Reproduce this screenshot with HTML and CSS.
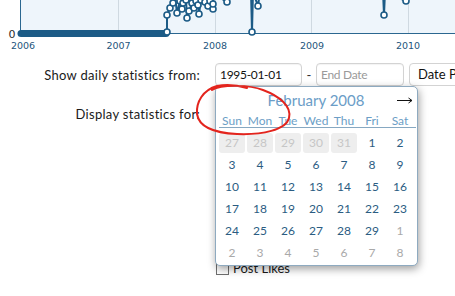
FILE: index.html
```html
<!DOCTYPE html>
<html lang="en">
<head>
<meta charset="utf-8">
<title>Daily Statistics</title>
<link rel="stylesheet" href="styles.css">
</head>
<body>
<svg class="chart" width="455" height="52" viewBox="0 0 455 52" xmlns="http://www.w3.org/2000/svg">
  <rect x="20" y="0" width="435" height="34" fill="#eef5fb"/>
  <g stroke="#cfd9e1" stroke-width="1">
    <line x1="118.5" y1="0" x2="118.5" y2="33"/>
    <line x1="215.5" y1="0" x2="215.5" y2="33"/>
    <line x1="311.5" y1="0" x2="311.5" y2="33"/>
    <line x1="408.5" y1="0" x2="408.5" y2="33"/>
  </g>
  <line x1="20.5" y1="0" x2="20.5" y2="34" stroke="#2b6790" stroke-width="1"/>
  <line x1="20" y1="33.5" x2="455" y2="33.5" stroke="#2b6790" stroke-width="1"/>
  <text class="axis-zero" x="12" y="38" text-anchor="middle">0</text>
  <g class="axis-year" text-anchor="middle">
    <text x="23" y="49">2006</text>
    <text x="118.5" y="49">2007</text>
    <text x="215" y="49">2008</text>
    <text x="312" y="49">2009</text>
    <text x="408" y="49">2010</text>
  </g>
  <line x1="21" y1="33.5" x2="166" y2="33.5" stroke="#1c5b86" stroke-width="7" stroke-linecap="round"/>
  <polyline fill="none" stroke="#1c5b86" stroke-width="2" stroke-linejoin="round"
    points="166,33 167,32 167,15 170,8 173,3 175,-4 177,13 180,1 182,9 183,3 186,0 187,18 189,11 192,3 194,8 196,1 198,5 199,14 201,0 205,2 208,6 210,1 213,9 213,4 214,-6 227,2 229,-8 251,-8 252,32 253,-8 258,6 260,-8 383,-8 384,15 385,-8 406,1 408,-8 455,-8"/>
  <g fill="#ffffff" stroke="#1c5b86" stroke-width="1.6">
    <circle cx="167" cy="32" r="3"/>
    <circle cx="167" cy="15" r="3"/>
    <circle cx="170" cy="8" r="3"/>
    <circle cx="173" cy="3" r="3"/>
    <circle cx="177" cy="13" r="3"/>
    <circle cx="180" cy="1" r="3"/>
    <circle cx="182" cy="9" r="3"/>
    <circle cx="183" cy="3" r="3"/>
    <circle cx="186" cy="0" r="3"/>
    <circle cx="187" cy="18" r="3"/>
    <circle cx="189" cy="11" r="3"/>
    <circle cx="192" cy="3" r="3"/>
    <circle cx="194" cy="8" r="3"/>
    <circle cx="196" cy="1" r="3"/>
    <circle cx="198" cy="5" r="3"/>
    <circle cx="199" cy="14" r="3"/>
    <circle cx="201" cy="0" r="3"/>
    <circle cx="205" cy="2" r="3"/>
    <circle cx="208" cy="6" r="3"/>
    <circle cx="210" cy="1" r="3"/>
    <circle cx="213" cy="9" r="3"/>
    <circle cx="213" cy="4" r="3"/>
    <circle cx="227" cy="2" r="3"/>
    <circle cx="252" cy="32" r="3"/>
    <circle cx="258" cy="6" r="3"/>
    <circle cx="384" cy="15" r="3"/>
    <circle cx="406" cy="1" r="3"/>
  </g>
</svg>

<form class="stats-form">
  <div class="form-row row-dates">
    <label class="row-label" for="start">Show daily statistics from:</label>
    <div class="controls">
      <div class="date-field">
        <input class="text-input" id="start" type="text" value="1995-01-01">
        <div class="calendar">
          <div class="cal-head">
            <span class="cal-prev"></span>
            <span class="cal-title">February 2008</span>
            <svg class="cal-next" width="16" height="7" viewBox="0 0 16 7" xmlns="http://www.w3.org/2000/svg">
              <path d="M0 3.5H15M11.5 1L15 3.5L11.5 6" fill="none" stroke="#111" stroke-width="1"/>
            </svg>
          </div>
          <div class="cal-days">
            <span>Sun</span><span>Mon</span><span>Tue</span><span>Wed</span><span>Thu</span><span>Fri</span><span>Sat</span>
          </div>
          <div class="cal-grid">
            <span class="day disabled">27</span><span class="day disabled">28</span><span class="day disabled">29</span><span class="day disabled">30</span><span class="day disabled">31</span><span class="day">1</span><span class="day">2</span>
            <span class="day">3</span><span class="day">4</span><span class="day">5</span><span class="day">6</span><span class="day">7</span><span class="day">8</span><span class="day">9</span>
            <span class="day">10</span><span class="day">11</span><span class="day">12</span><span class="day">13</span><span class="day">14</span><span class="day">15</span><span class="day">16</span>
            <span class="day">17</span><span class="day">18</span><span class="day">19</span><span class="day">20</span><span class="day">21</span><span class="day">22</span><span class="day">23</span>
            <span class="day">24</span><span class="day">25</span><span class="day">26</span><span class="day">27</span><span class="day">28</span><span class="day">29</span><span class="day other">1</span>
            <span class="day other">2</span><span class="day other">3</span><span class="day other">4</span><span class="day other">5</span><span class="day other">6</span><span class="day other">7</span><span class="day other">8</span>
          </div>
        </div>
      </div>
      <span class="dash">-</span>
      <input class="text-input" type="text" placeholder="End Date">
      <div class="select-input">Date Presets:</div>
    </div>
  </div>

  <div class="form-row row-types">
    <div class="row-label">Display statistics for:</div>
    <ul class="check-list">
      <li><input type="checkbox" class="check"><span>Post Likes</span></li>
    </ul>
  </div>
</form>

<svg class="annotation" width="110" height="60" viewBox="190 80 110 60" xmlns="http://www.w3.org/2000/svg">
  <path d="M 212 90 C 222 84, 250 85, 263 90 C 279 96, 292 106, 289 118 C 286 130, 262 135, 237 134 C 215 133, 199 127, 197 114 C 196 102, 203 90, 217 86 C 228 84, 240 86, 247 88"
    fill="none" stroke="#e3241d" stroke-width="2" stroke-linecap="round" stroke-linejoin="round"/>
</svg>
</body>
</html>
```

FILE: styles.css
```css
html, body {
  margin: 0;
  padding: 0;
  background: #ffffff;
  overflow: hidden;
}

body {
  position: relative;
  width: 455px;
  height: 296px;
  font-family: "Lato", "Liberation Sans", sans-serif;
  font-size: 13px;
  color: #1a1a1a;
}

.chart {
  display: block;
}

.axis-zero {
  font-family: "DejaVu Sans", sans-serif;
  font-size: 11px;
  fill: #2a2a2a;
}

.axis-year {
  font-family: "DejaVu Sans", sans-serif;
  font-size: 9.5px;
  fill: #24557c;
}

.stats-form {
  margin: 11px 0 0;
}

.form-row {
  display: grid;
  grid-template-columns: 200px auto;
  column-gap: 15px;
}

.row-dates {
  align-items: center;
}

.row-types {
  margin-top: 17px;
  align-items: start;
}

.row-label {
  text-align: right;
  line-height: 22px;
  white-space: nowrap;
  letter-spacing: 0.3px;
}

.controls {
  display: flex;
  align-items: center;
  white-space: nowrap;
}

.date-field {
  position: relative;
}

.text-input {
  box-sizing: border-box;
  display: block;
  width: 87px;
  height: 23px;
  margin: 0;
  padding: 0 4px;
  border: 1px solid #d3d3d3;
  border-radius: 4px;
  background: #ffffff;
  font-family: "Lato", "Liberation Sans", sans-serif;
  font-size: 12px;
  letter-spacing: -0.3px;
  color: #111;
  box-shadow: inset 0 1px 1px rgba(0, 0, 0, 0.05);
}

.text-input::placeholder {
  color: #9a9a9a;
}

.controls > .text-input {
  width: 88px;
}

.dash {
  width: 14px;
  text-align: center;
  color: #333;
}

.select-input {
  box-sizing: border-box;
  margin-left: 5px;
  height: 23px;
  width: 120px;
  padding: 0 8px;
  line-height: 21px;
  border: 1px solid #d3d3d3;
  border-radius: 4px;
  background: #ffffff;
  color: #111;
}

.calendar {
  position: absolute;
  z-index: 10;
  top: 100%;
  left: 0;
  box-sizing: border-box;
  width: 203px;
  height: 180px;
  padding: 0 4px 2px 3px;
  border: 1px solid #8eaac0;
  border-radius: 5px;
  background: #ffffff;
  box-shadow: 1px 3px 9px rgba(0, 0, 0, 0.38);
}

.cal-head {
  display: grid;
  grid-template-columns: 22px 1fr 22px;
  align-items: center;
  height: 26px;
}

.cal-title {
  text-align: center;
  font-size: 15px;
  color: #6b9dc7;
}

.cal-next {
  display: block;
  justify-self: end;
  margin-top: 1px;
}

.cal-days {
  display: grid;
  grid-template-columns: repeat(7, 26px);
  column-gap: 2px;
  margin-right: -3px;
  height: 14px;
  line-height: 15px;
  border-bottom: 1px solid #86a8c2;
  font-size: 12px;
  color: #6c9ec6;
  text-align: center;
}

.cal-grid {
  display: grid;
  grid-template-columns: repeat(7, 26px);
  grid-auto-rows: 20px;
  gap: 2px;
  margin-top: 5px;
}

.day {
  line-height: 20px;
  text-align: center;
  font-size: 12px;
  color: #2b5c82;
  border-radius: 3px;
}

.day.disabled {
  background: #eeeeee;
  color: #c6c6c6;
}

.day.other {
  color: #a9a9a9;
}

.check-list {
  list-style: none;
  margin: 0;
  padding: 154px 0 0 1px;
}

.check-list li {
  display: flex;
  align-items: center;
  gap: 4px;
  height: 22px;
}

.check {
  appearance: none;
  -webkit-appearance: none;
  box-sizing: border-box;
  width: 13px;
  height: 13px;
  margin: 0;
  border: 1px solid #6f6f6f;
  background: #ffffff;
}

.annotation {
  position: absolute;
  z-index: 20;
  left: 190px;
  top: 80px;
}
```
